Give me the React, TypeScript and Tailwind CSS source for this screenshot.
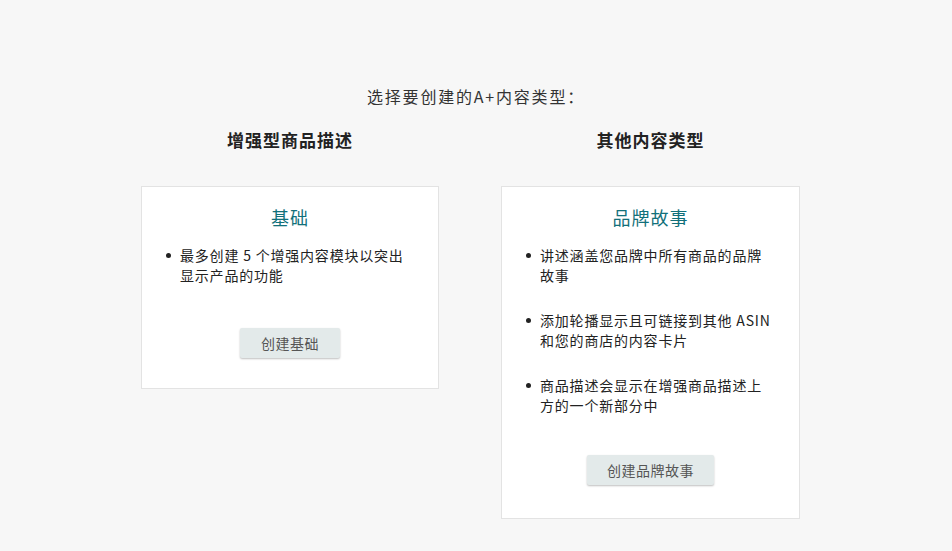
import React from "react";

const Btn = ({ children, w }: { children: React.ReactNode; w: string }) => (
  <button className={`${w} h-[30px] bg-[#e3eaea] rounded-[2px] shadow-[0_1px_2px_rgba(0,0,0,0.25)] text-[14px] text-[#555] tracking-[0.5px]`}>{children}</button>
);

const Item = ({ children }: { children: React.ReactNode }) => (
  <li className="flex gap-[9px]">
    <span className="w-[5px] h-[5px] rounded-full bg-[#222] mt-[8px] shrink-0" />
    <span>{children}</span>
  </li>
);

export default function App() {
  return (
    <div className="w-[952px] h-[551px] bg-[#f7f7f7] text-[#222] overflow-hidden" style={{ fontFamily: '"Noto Sans CJK SC", "Noto Sans", sans-serif' }}>
      <div className="pt-[84px] text-center text-[16px] tracking-[1.8px] text-[#333] leading-[24px] pl-[0px]">选择要创建的A+内容类型：</div>
      <div className="flex gap-[62px] pl-[141px] mt-[20px]">
        <div className="w-[298px] flex flex-col items-center">
          <div className="text-[17px] font-bold tracking-[1px] leading-[24px]">增强型商品描述</div>
          <div className="mt-[34px] w-full h-[203px] bg-white border border-[#e3e3e3] flex flex-col items-center pt-[17px]">
            <div className="text-[18px] text-[#12707a] tracking-[1px] leading-[26px]">基础</div>
            <ul className="self-start pl-[24px] pr-[26px] mt-[15px] text-[14px] tracking-[0.8px] leading-[20px]">
              <Item>最多创建 5 个增强内容模块以突出显示产品的功能</Item>
            </ul>
            <div className="mt-[43px]"><Btn w="w-[100px]">创建基础</Btn></div>
          </div>
        </div>
        <div className="w-[299px] flex flex-col items-center">
          <div className="text-[17px] font-bold tracking-[1px] leading-[24px]">其他内容类型</div>
          <div className="mt-[34px] w-full h-[333px] bg-white border border-[#e3e3e3] flex flex-col items-center pt-[17px]">
            <div className="text-[18px] text-[#12707a] tracking-[1px] leading-[26px]">品牌故事</div>
            <ul className="self-start pl-[24px] pr-[26px] mt-[15px] text-[14px] tracking-[0.8px] leading-[20px] flex flex-col gap-[25px]">
              <Item>讲述涵盖您品牌中所有商品的品牌故事</Item>
              <Item>添加轮播显示且可链接到其他 ASIN 和您的商店的内容卡片</Item>
              <Item>商品描述会显示在增强商品描述上方的一个新部分中</Item>
            </ul>
            <div className="mt-[40px]"><Btn w="w-[127px]">创建品牌故事</Btn></div>
          </div>
        </div>
      </div>
    </div>
  );
}
